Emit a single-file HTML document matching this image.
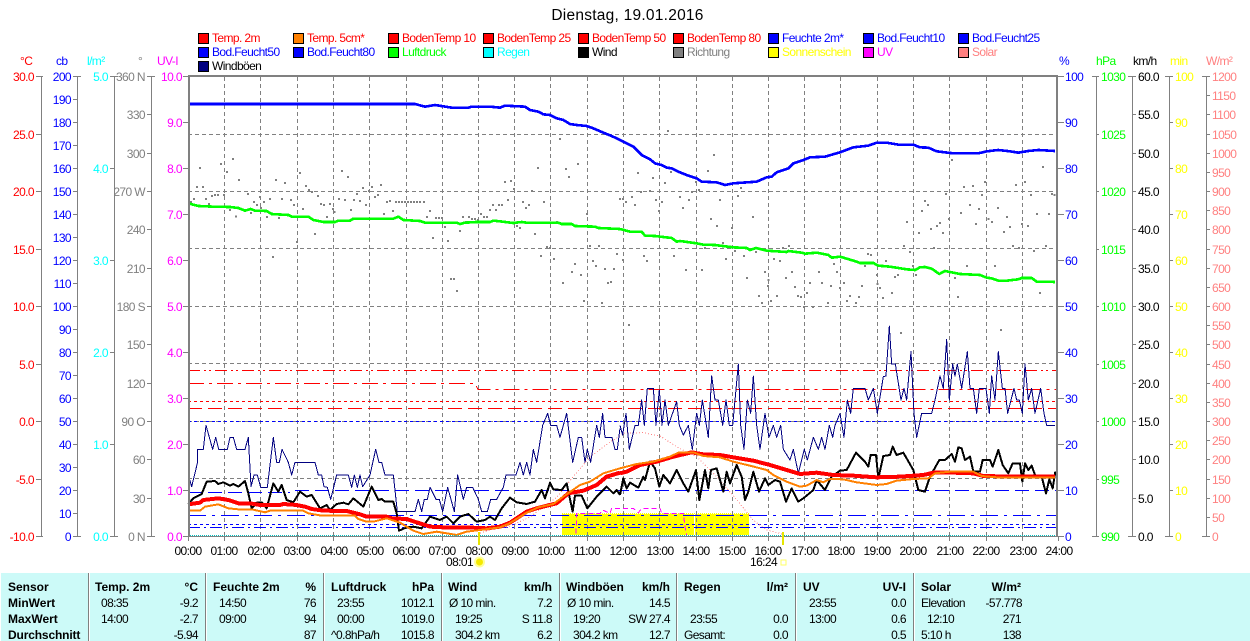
<!DOCTYPE html>
<html><head><meta charset="utf-8"><title>Dienstag, 19.01.2016</title>
<style>
html,body{margin:0;padding:0;background:#fff;width:1250px;height:641px;overflow:hidden}
svg{display:block;position:absolute;left:0;top:0}
text{font-family:"Liberation Sans",Arial,sans-serif;font-size:12px;letter-spacing:-.6px;white-space:pre}
.e text,text.e{text-anchor:end}
.s text{text-anchor:start}
.m text{text-anchor:middle}
.b text{font-weight:bold;letter-spacing:0}
.c{shape-rendering:crispEdges;fill:none}
</style></head><body>
<svg width="1250" height="641" viewBox="0 0 1250 641" xmlns="http://www.w3.org/2000/svg">
<rect width="1250" height="641" fill="#fff"/>
<text x="627.5" y="20" text-anchor="middle" style="font-size:15.5px;letter-spacing:.25px" fill="#000">Dienstag, 19.01.2016</text>

<!-- legend -->
<g stroke="#000" stroke-width="1" shape-rendering="crispEdges">
<rect x="198.500" y="33.500" width="10" height="10" fill="#f00"/><rect x="293.500" y="33.500" width="10" height="10" fill="#ff8000"/><rect x="388.500" y="33.500" width="10" height="10" fill="#f00"/><rect x="483.500" y="33.500" width="10" height="10" fill="#f00"/><rect x="578.500" y="33.500" width="10" height="10" fill="#f00"/><rect x="673.500" y="33.500" width="10" height="10" fill="#f00"/><rect x="768.500" y="33.500" width="10" height="10" fill="#00f"/><rect x="863.500" y="33.500" width="10" height="10" fill="#00f"/><rect x="958.500" y="33.500" width="10" height="10" fill="#00f"/>
<rect x="198.500" y="47.500" width="10" height="10" fill="#00f"/><rect x="293.500" y="47.500" width="10" height="10" fill="#00f"/><rect x="388.500" y="47.500" width="10" height="10" fill="#0f0"/><rect x="483.500" y="47.500" width="10" height="10" fill="#0ff"/><rect x="578.500" y="47.500" width="10" height="10" fill="#000"/><rect x="673.500" y="47.500" width="10" height="10" fill="#808080"/><rect x="768.500" y="47.500" width="10" height="10" fill="#ff0"/><rect x="863.500" y="47.500" width="10" height="10" fill="#f0f"/><rect x="958.500" y="47.500" width="10" height="10" fill="#ff8080"/>
<rect x="198.500" y="61.500" width="10" height="10" fill="#000080"/>
</g>
<g>
<text x="212" y="42" fill="#f00">Temp. 2m</text><text x="307" y="42" fill="#f00">Temp. 5cm*</text><text x="402" y="42" fill="#f00">BodenTemp 10</text><text x="497" y="42" fill="#f00">BodenTemp 25</text><text x="592" y="42" fill="#f00">BodenTemp 50</text><text x="687" y="42" fill="#f00">BodenTemp 80</text><text x="782" y="42" fill="#00f">Feuchte 2m*</text><text x="877" y="42" fill="#00f">Bod.Feucht10</text><text x="972" y="42" fill="#00f">Bod.Feucht25</text>
<text x="212" y="56" fill="#00f">Bod.Feucht50</text><text x="307" y="56" fill="#00f">Bod.Feucht80</text><text x="402" y="56" fill="#0f0">Luftdruck</text><text x="497" y="56" fill="#0ff">Regen</text><text x="592" y="56" fill="#000">Wind</text><text x="687" y="56" fill="#808080">Richtung</text><text x="782" y="56" fill="#ff0">Sonnenschein</text><text x="877" y="56" fill="#f0f">UV</text><text x="972" y="56" fill="#ff8080">Solar</text>
<text x="212" y="70" fill="#000">Windböen</text>
</g>

<!-- unit labels -->
<text x="20" y="65" fill="#f00">°C</text><text x="56" y="65" fill="#00f">cb</text><text x="87" y="65" fill="#0ff">l/m²</text><text x="138" y="65" fill="#808080">°</text><text x="157" y="65" fill="#f0f">UV-I</text>
<text x="1059" y="65" fill="#00f">%</text><text x="1096" y="65" fill="#0f0">hPa</text><text x="1133" y="65" fill="#000">km/h</text><text x="1170" y="65" fill="#ff0">min</text><text x="1206" y="65" fill="#ff8080">W/m²</text>

<!-- axes -->
<g class="c" stroke="#808080" stroke-width="1">
<path d="M41.500 76V536M36 76.500H43M36 134.500H41M36 191.500H41M36 249.500H41M36 306.500H41M36 364.500H41M36 421.500H41M36 479.500H41M36 536.500H43"/>
<path d="M77.500 76V536M73 76.500H81M73 99.500H77M73 122.500H77M73 145.500H77M73 168.500H77M73 191.500H77M73 214.500H77M73 237.500H77M73 260.500H77M73 283.500H77M73 306.500H77M73 329.500H77M73 352.500H77M73 375.500H77M73 398.500H77M73 421.500H77M73 444.500H77M73 467.500H77M73 490.500H77M73 513.500H77M73 536.500H81"/>
<path d="M114.500 76V536M110 76.500H118M110 168.500H114M110 260.500H114M110 352.500H114M110 444.500H114M110 536.500H118"/>
<path d="M151.500 76V536M147 76.500H155M147 114.500H151M147 153.500H151M147 191.500H151M147 229.500H151M147 268.500H151M147 306.500H151M147 344.500H151M147 383.500H151M147 421.500H151M147 459.500H151M147 498.500H151M147 536.500H155"/>
<path d="M183 76.500H188M183 122.500H188M183 168.500H188M183 214.500H188M183 260.500H188M183 306.500H188M183 352.500H188M183 398.500H188M183 444.500H188M183 490.500H188M183 536.500H188"/>
<path d="M1058 76.500H1064M1058 122.500H1064M1058 168.500H1064M1058 214.500H1064M1058 260.500H1064M1058 306.500H1064M1058 352.500H1064M1058 398.500H1064M1058 444.500H1064M1058 490.500H1064M1058 536.500H1064"/>
<path d="M1096.500 76V536M1092 76.500H1099M1096 134.500H1099M1096 191.500H1099M1096 249.500H1099M1096 306.500H1099M1096 364.500H1099M1096 421.500H1099M1096 479.500H1099M1092 536.500H1099"/>
<path d="M1132.500 76V536M1128 76.500H1136M1132 114.500H1136M1132 153.500H1136M1132 191.500H1136M1132 229.500H1136M1132 268.500H1136M1132 306.500H1136M1132 344.500H1136M1132 383.500H1136M1132 421.500H1136M1132 459.500H1136M1132 498.500H1136M1128 536.500H1136"/>
<path d="M1169.500 76V536M1165 76.500H1173M1169 122.500H1173M1169 168.500H1173M1169 214.500H1173M1169 260.500H1173M1169 306.500H1173M1169 352.500H1173M1169 398.500H1173M1169 444.500H1173M1169 490.500H1173M1165 536.500H1173"/>
<path d="M1206.500 76V536M1202 76.500H1210M1206 95.500H1210M1206 114.500H1210M1206 134.500H1210M1206 153.500H1210M1206 172.500H1210M1206 191.500H1210M1206 210.500H1210M1206 229.500H1210M1206 249.500H1210M1206 268.500H1210M1206 287.500H1210M1206 306.500H1210M1206 325.500H1210M1206 344.500H1210M1206 364.500H1210M1206 383.500H1210M1206 402.500H1210M1206 421.500H1210M1206 440.500H1210M1206 459.500H1210M1206 479.500H1210M1206 498.500H1210M1206 517.500H1210M1202 536.500H1210"/>
</g>

<g class="e" fill="#f00"><text x="34" y="81">30.0</text><text x="34" y="139">25.0</text><text x="34" y="196">20.0</text><text x="34" y="254">15.0</text><text x="34" y="311">10.0</text><text x="34" y="369">5.0</text><text x="34" y="426">0.0</text><text x="34" y="484">-5.0</text><text x="34" y="541">-10.0</text></g>
<g class="e" fill="#00f"><text x="71" y="81">200</text><text x="71" y="104">190</text><text x="71" y="127">180</text><text x="71" y="150">170</text><text x="71" y="173">160</text><text x="71" y="196">150</text><text x="71" y="219">140</text><text x="71" y="242">130</text><text x="71" y="265">120</text><text x="71" y="288">110</text><text x="71" y="311">100</text><text x="71" y="334">90</text><text x="71" y="357">80</text><text x="71" y="380">70</text><text x="71" y="403">60</text><text x="71" y="426">50</text><text x="71" y="449">40</text><text x="71" y="472">30</text><text x="71" y="495">20</text><text x="71" y="518">10</text><text x="71" y="541">0</text></g>
<g class="e" fill="#0ff"><text x="108" y="81">5.0</text><text x="108" y="173">4.0</text><text x="108" y="265">3.0</text><text x="108" y="357">2.0</text><text x="108" y="449">1.0</text><text x="108" y="541">0.0</text></g>
<g class="e" fill="#808080"><text x="145" y="81">360 N</text><text x="145" y="119">330</text><text x="145" y="158">300</text><text x="145" y="196">270 W</text><text x="145" y="234">240</text><text x="145" y="273">210</text><text x="145" y="311">180 S</text><text x="145" y="349">150</text><text x="145" y="388">120</text><text x="145" y="426">90 O</text><text x="145" y="464">60</text><text x="145" y="503">30</text><text x="145" y="541">0 N</text></g>
<g class="e" fill="#f0f"><text x="182" y="81">10.0</text><text x="182" y="127">9.0</text><text x="182" y="173">8.0</text><text x="182" y="219">7.0</text><text x="182" y="265">6.0</text><text x="182" y="311">5.0</text><text x="182" y="357">4.0</text><text x="182" y="403">3.0</text><text x="182" y="449">2.0</text><text x="182" y="495">1.0</text><text x="182" y="541">0.0</text></g>
<g fill="#00f"><text x="1065" y="81">100</text><text x="1065" y="127">90</text><text x="1065" y="173">80</text><text x="1065" y="219">70</text><text x="1065" y="265">60</text><text x="1065" y="311">50</text><text x="1065" y="357">40</text><text x="1065" y="403">30</text><text x="1065" y="449">20</text><text x="1065" y="495">10</text><text x="1065" y="541">0</text></g>
<g fill="#0f0"><text x="1101" y="81">1030</text><text x="1101" y="139">1025</text><text x="1101" y="196">1020</text><text x="1101" y="254">1015</text><text x="1101" y="311">1010</text><text x="1101" y="369">1005</text><text x="1101" y="426">1000</text><text x="1101" y="484">995</text><text x="1101" y="541">990</text></g>
<g fill="#000"><text x="1138" y="81">60.0</text><text x="1138" y="119">55.0</text><text x="1138" y="158">50.0</text><text x="1138" y="196">45.0</text><text x="1138" y="234">40.0</text><text x="1138" y="273">35.0</text><text x="1138" y="311">30.0</text><text x="1138" y="349">25.0</text><text x="1138" y="388">20.0</text><text x="1138" y="426">15.0</text><text x="1138" y="464">10.0</text><text x="1138" y="503">5.0</text><text x="1138" y="541">0.0</text></g>
<g fill="#ff0"><text x="1175" y="81">100</text><text x="1175" y="127">90</text><text x="1175" y="173">80</text><text x="1175" y="219">70</text><text x="1175" y="265">60</text><text x="1175" y="311">50</text><text x="1175" y="357">40</text><text x="1175" y="403">30</text><text x="1175" y="449">20</text><text x="1175" y="495">10</text><text x="1175" y="541">0</text></g>
<g fill="#ff8080"><text x="1212" y="81">1200</text><text x="1212" y="100">1150</text><text x="1212" y="119">1100</text><text x="1212" y="139">1050</text><text x="1212" y="158">1000</text><text x="1212" y="177">950</text><text x="1212" y="196">900</text><text x="1212" y="215">850</text><text x="1212" y="234">800</text><text x="1212" y="254">750</text><text x="1212" y="273">700</text><text x="1212" y="292">650</text><text x="1212" y="311">600</text><text x="1212" y="330">550</text><text x="1212" y="349">500</text><text x="1212" y="369">450</text><text x="1212" y="388">400</text><text x="1212" y="407">350</text><text x="1212" y="426">300</text><text x="1212" y="445">250</text><text x="1212" y="464">200</text><text x="1212" y="484">150</text><text x="1212" y="503">100</text><text x="1212" y="522">50</text><text x="1212" y="541">0</text></g>

<!-- yellow sunshine -->
<rect x="562" y="514" width="187" height="21" fill="#ff0"/>
<path class="c" d="M562 513.500H749" stroke="#ff0" stroke-dasharray="1 1"/>
<rect x="694" y="514" width="1" height="21" fill="#fff"/>

<!-- grid -->
<g class="c" stroke="#808080" stroke-width="1" stroke-dasharray="4 3">
<path d="M188 134.500H1056M188 191.500H1056M188 248.500H1056M188 306.500H1056M188 363.500H1056M188 421.500H1056M188 478.500H1056"/>
<path d="M224.500 77V536M260.500 77V536M297.500 77V536M333.500 77V536M369.500 77V536M406.500 77V536M442.500 77V536M478.500 77V536M514.500 77V536M550.500 77V536M587.500 77V536M623.500 77V536M659.500 77V536M696.500 77V536M732.500 77V536M768.500 77V536M804.500 77V536M840.500 77V536M877.500 77V536M913.500 77V536M949.500 77V536M986.500 77V536M1022.500 77V536"/>
</g>

<!-- direction dots -->
<g transform="translate(180,90) scale(.33333)" stroke="#808080" stroke-width="6" class="c"><path d="M57 234h6M120 222h6M138 246h6M156 207h6M174 270h6M48 291h6M66 291h6M39 327h6M30 336h6M75 327h6M84 342h6M93 318h6M102 315h6M111 315h6M129 315h6M147 360h6M165 380h6M201 312h6M210 369h6M219 336h6M228 345h6M237 321h6M240 354h6M249 336h6M258 381h6M267 327h6M276 501h6M285 270h6M294 384h6M303 327h6M312 279h6M330 330h6M339 345h6M348 456h6M357 249h6M366 357h6M375 288h6M384 300h6M393 306h6M402 432h6M411 318h6M420 342h6M429 345h6M438 381h6M447 342h6M456 357h6M460 366h6M474 327h6M483 243h6M492 330h6M501 261h6M510 360h6M519 330h6M528 312h6M537 333h6M546 294h6M555 345h6M564 303h6M573 291h6M582 321h6M591 315h6M600 285h6M609 372h6M618 336h6M627 333h6M636 363h6M645 336h6M654 336h6M663 336h6M672 336h6M681 336h6M690 336h6M699 336h6M708 336h6M717 336h6M729 336h6M738 381h6M747 363h6M756 444h6M765 384h6M774 384h6M783 384h6M792 411h6M801 453h6M810 567h6M819 567h6M828 603h6M837 423h6M846 381h6M855 396h6M864 381h6M873 387h6M882 387h6M891 390h6M900 372h6M909 381h6M918 381h6M927 360h6M936 345h6M945 360h6M954 345h6M963 345h6M972 276h6M981 330h6M990 273h6M999 297h6M1008 408h6M1017 414h6M1026 336h6M1035 354h6M1044 345h6M1053 303h6M1062 432h6M1071 234h6M1080 498h6M1089 336h6M1098 471h6M1107 474h6M1119 507h6M1128 396h6M1137 147h6M1146 579h6M1155 237h6M1164 261h6M1173 546h6M1182 522h6M1191 222h6M1200 555h6M1209 633h6M1218 372h6M1227 468h6M1236 513h6M1245 528h6M1254 468h6M1263 639h6M1272 537h6M1281 579h6M1290 576h6M1299 537h6M1308 492h6M1317 327h6"/></g>
<g transform="translate(620,90) scale(.33333)" stroke="#808080" stroke-width="6" class="c"><path d="M6 327h6M15 336h6M33 321h6M42 345h6M51 249h6M6 510h6M60 306h6M69 498h6M78 513h6M87 303h6M96 264h6M105 330h6M114 363h6M123 336h6M132 279h6M141 123h6M150 246h6M159 498h6M177 321h6M186 354h6M195 540h6M204 330h6M213 306h6M225 276h6M234 300h6M243 540h6M252 474h6M261 243h6M270 387h6M279 195h6M288 408h6M297 330h6M306 459h6M315 507h6M324 471h6M333 414h6M342 483h6M351 318h6M360 294h6M369 498h6M378 564h6M396 381h6M405 486h6M414 618h6M423 639h6M432 546h6M441 588h6M442 570h6M450 633h6M459 507h6M468 618h6M477 513h6M486 474h6M495 564h6M504 468h6M513 546h6M522 591h6M531 618h6M540 621h6M549 651h6M558 609h6M567 579h6M576 651h6M594 546h6M603 579h6M621 639h6M630 588h6M639 522h6M648 546h6M657 594h6M669 579h6M678 633h6M687 618h6M705 639h6M714 621h6M723 588h6M732 528h6M741 492h6M750 495h6M768 555h6M769 582h6M777 594h6M786 624h6M795 513h6M813 609h6M822 561h6M831 555h6M849 468h6M858 396h6M867 486h6M876 528h6M885 555h6M894 429h6M903 363h6M912 333h6M921 345h6M930 417h6M939 474h6M948 408h6M957 399h6M966 429h6M975 312h6M984 387h6M993 210h6M1002 564h6M1011 621h6M1020 369h6M1029 291h6M1038 528h6M1047 345h6M1056 288h6M1065 402h6M1074 357h6M1083 315h6M1092 276h6M1103 387h6M1113 396h6M1122 528h6M1131 354h6M1149 426h6M1158 381h6M1167 411h6M1176 468h6M1185 285h6M1194 474h6M1203 402h6M1212 276h6M1221 408h6M1230 315h6M1239 483h6M1248 372h6M1257 609h6M1266 231h6M1275 468h6M1284 372h6M1293 312h6M1300 315h6"/></g>
<path class="c" stroke="#808080" stroke-width="2" d="M628 325h2M900 333h2M1000 330h2"/>

<!-- coloured reference lines -->
<g class="c" stroke="#f00" stroke-width="1">
<path d="M188 370.500H1056" stroke-dasharray="12 4 2 3 2 4"/>
<path d="M188 383.500H475L478 389.500H1056" stroke-dasharray="16 5 3 5"/>
<path d="M188 401.500H1056" stroke-dasharray="3 3"/>
<path d="M188 408.500H1056" stroke-dasharray="14 6"/>
</g>
<g class="c" stroke="#00f" stroke-width="1">
<path d="M188 421.500H1056" stroke-dasharray="3 3"/>
<path d="M188 492.500H290M295 490.500H1056" stroke-dasharray="14 6"/>
<path d="M188 515.500H1056" stroke-dasharray="18 6 3 6"/>
<path d="M188 524.500H1056" stroke-dasharray="3 3"/>
<path d="M188 527.500H1056" stroke-dasharray="12 4 2 4"/>
</g>

<!-- solar -->
<polyline class="c" stroke="#ff8080" stroke-dasharray="1 2" points="480,533 497,528 508,527 530,517 557,497 573,477 590,457 610,442 625,433 643,432.700 660,436 677,447 697,457 717,477 737,500 753,520 767,530 782,534"/>
<!-- uv -->
<g transform="translate(420,480) scale(.33333)"><polyline class="c" stroke="#f0f" stroke-width="3" stroke-dasharray="15 9" points="468,160 470,100 540,100 545,92 552,92 570,100 575,85 640,85 655,98 665,85 720,85 725,100 790,100 795,140 800,165"/></g>

<!-- gust -->
<g transform="translate(180,320) scale(.33333)" class="c" stroke="#000080" stroke-width="3" stroke-linejoin="round">
<polyline points="25,465 35,500 52,430 52,388 70,388 78,316 98,388 107,352 116,388 142,388 150,352 160,352 170,388 195,388 205,352 213,500 222,465 232,465 242,502 262,502 280,352 290,427 298,427 306,388 325,427 335,465 345,427 405,427 415,465 425,465 432,500 442,502 452,538 470,465 505,465 515,502 523,465 532,502 540,465 548,500 570,465 587,388 597,427 605,427 615,465 640,465 652,575 705,575 715,538 725,575 733,538 742,538 750,502 768,538 778,538 788,575 803,502 823,575 833,465 850,538 860,502 878,502 895,538 905,575 922,575 932,538 950,538 970,502 978,465 1008,465 1020,427 1030,465 1040,427 1050,465 1060,388 1070,427 1088,316 1103,280 1112,316 1130,316 1140,352 1160,280 1178,427 1195,352 1205,352 1215,427 1222,388 1232,427 1250,316 1258,352 1268,280 1275,352 1296,352 1305,388 1312,388 1320,325"/>
</g>
<g transform="translate(620,320) scale(.33333)" class="c" stroke="#000080" stroke-width="3" stroke-linejoin="round">
<polyline points="0,316 8,345 18,280 28,388 45,316 55,316 65,240 73,316 82,205 100,205 108,316 118,210 126,316 135,240 145,316 170,245 178,316 190,345 205,316 217,388 230,280 238,316 247,240 265,352 275,168 285,240 295,240 308,316 318,240 328,316 338,316 355,132 362,316 372,388 382,240 392,280 400,168 410,316 420,388 435,280 447,352 460,316 470,352 482,316 490,388 510,420 520,388 535,460 553,388 562,420 580,352 595,388 605,352 615,388 628,316 638,352 645,316 660,280 672,352 682,240 692,280 700,205 735,205 745,240 760,205 772,280 790,170 798,168 808,18 815,132 826,132 843,240 852,205 860,240 873,95 882,280 890,352 905,280 935,280 945,240 960,168 970,205 980,58 988,240 998,132 1005,168 1012,132 1025,205 1042,95 1050,205 1060,205 1070,280 1078,205 1098,205 1108,280 1115,168 1125,240 1135,95 1147,205 1155,205 1163,280 1182,205 1190,240 1198,240 1207,280 1215,132 1225,240 1235,205 1245,280 1262,205 1272,280 1280,316 1305,316"/>
</g>

<!-- wind -->
<g transform="translate(180,320) scale(.33333)" class="c" stroke="#000" stroke-width="6" stroke-linejoin="round">
<polyline points="25,552 40,535 65,522 80,485 105,483 115,492 130,487 150,497 160,492 175,500 195,483 205,520 215,565 230,548 245,547 260,565 280,490 295,515 305,495 320,540 340,547 360,515 380,530 395,525 420,565 440,555 450,570 470,552 490,548 505,553 520,535 550,560 575,500 595,540 605,537 615,545 640,545 650,580 657,632 680,622 700,620 725,625 750,590 780,600 800,590 820,610 840,590 865,582 890,605 915,600 930,590 945,600 965,565 990,533 1010,547 1040,552 1065,545 1085,510 1095,535 1110,488 1120,508 1145,510 1160,490 1178,575 1185,527 1205,527 1222,565 1250,530 1280,500 1300,520 1310,510 1320,525"/>
</g>
<g transform="translate(620,320) scale(.33333)" class="c" stroke="#000" stroke-width="6" stroke-linejoin="round">
<polyline points="0,525 10,475 20,505 30,488 55,503 70,470 75,480 90,425 105,445 118,500 130,465 150,490 170,450 190,490 205,515 228,450 238,540 255,450 265,505 273,450 290,445 310,515 320,455 330,490 350,435 365,470 375,540 385,515 400,455 417,515 435,475 445,495 465,480 480,485 498,545 515,505 535,545 550,535 580,510 590,480 615,510 635,470 660,452 680,450 708,398 735,425 745,440 752,405 768,405 775,475 790,408 810,405 818,380 830,405 850,398 880,450 895,510 915,515 930,470 958,420 975,420 995,402 1005,425 1015,382 1025,385 1035,420 1050,410 1060,455 1080,455 1088,420 1110,420 1118,440 1135,390 1148,435 1165,460 1178,430 1200,430 1207,485 1215,430 1225,450 1235,437 1245,465 1265,470 1278,520 1288,478 1298,505 1306,455"/>
</g>

<!-- temp 2m -->
<g transform="translate(180,320) scale(.33333)" class="c" stroke="#f00" stroke-width="12" stroke-linejoin="round">
<polyline points="25,553 60,548 70,540 115,535 145,540 175,550 210,550 240,555 300,555 310,552 350,555 375,560 395,567 430,572 500,573 540,583 560,590 620,590 635,595 680,597 710,607 750,620 790,622 855,622 920,625 960,620 990,608 1040,575 1070,565 1130,550 1165,520 1210,512 1250,495 1280,470 1320,458"/>
</g>
<g transform="translate(620,320) scale(.33333)" class="c" stroke="#f00" stroke-width="12" stroke-linejoin="round">
<polyline points="0,460 20,455 60,435 110,425 160,410 215,397 250,403 300,405 340,412 400,422 450,435 500,450 540,462 590,458 640,465 700,467 770,472 840,470 910,465 945,457 1000,458 1060,460 1090,468 1180,470 1305,470"/>
</g>
<!-- temp 5cm -->
<g transform="translate(180,320) scale(.33333)" class="c" stroke="#ff8000" stroke-width="6" stroke-linejoin="round">
<polyline points="25,572 60,572 75,560 115,553 145,565 175,568 215,568 255,577 270,572 370,572 385,580 425,587 525,587 535,597 560,605 580,605 620,595 660,608 700,632 730,642 770,635 800,640 830,645 860,635 900,630 960,622 985,612 1040,578 1075,562 1120,552 1150,530 1200,495 1230,485 1270,460 1320,445"/>
</g>
<g transform="translate(620,320) scale(.33333)" class="c" stroke="#ff8000" stroke-width="6" stroke-linejoin="round">
<polyline points="0,445 50,432 100,425 150,410 175,398 220,397 250,408 300,412 340,425 390,437 440,450 460,465 500,485 540,500 560,497 590,480 610,487 630,477 670,478 710,487 770,495 800,492 830,482 880,477 925,475 945,460 990,455 1060,455 1085,468 1130,472 1305,472"/>
</g>

<!-- humidity -->
<g transform="translate(180,90) scale(.33333)" class="c" stroke="#00f" stroke-width="8" stroke-linejoin="round">
<polyline points="25,42 705,42 735,50 765,45 815,53 865,53 875,50 930,50 960,53 975,47 1035,50 1050,60 1075,65 1090,73 1110,75 1130,85 1150,90 1170,102 1190,105 1220,108 1240,115 1270,128 1295,138 1320,150"/>
</g>
<g transform="translate(620,90) scale(.33333)" class="c" stroke="#00f" stroke-width="8" stroke-linejoin="round">
<polyline points="0,150 40,170 65,195 90,208 105,220 125,225 140,233 155,235 175,245 200,255 230,265 245,275 290,277 315,285 340,280 410,275 440,262 455,260 470,247 505,235 520,220 550,210 570,202 615,200 660,187 700,172 745,167 770,158 800,158 835,164 880,164 900,172 925,173 950,184 1000,190 1075,190 1100,184 1135,180 1170,184 1195,188 1225,183 1255,180 1305,183"/>
</g>
<!-- pressure -->
<g transform="translate(180,90) scale(.33333)" class="c" stroke="#0f0" stroke-width="8" stroke-linejoin="round">
<polyline points="25,340 55,348 100,350 150,351 175,354 195,362 212,357 225,362 260,363 275,372 325,375 335,380 385,380 400,390 430,396 465,396 475,392 510,392 520,386 640,386 655,380 670,390 720,393 735,398 830,398 840,402 855,398 890,396 930,396 940,392 960,394 1000,399 1025,396 1040,398 1135,398 1145,402 1175,402 1185,408 1245,410 1255,414 1320,417"/>
</g>
<g transform="translate(620,90) scale(.33333)" class="c" stroke="#0f0" stroke-width="8" stroke-linejoin="round">
<polyline points="0,417 30,425 65,425 75,437 105,438 155,444 170,455 180,453 230,460 250,464 285,465 340,472 380,474 390,480 408,474 440,482 500,486 505,483 545,488 555,491 590,488 625,495 635,503 660,500 710,515 720,519 760,519 775,527 810,530 860,538 885,540 900,532 915,531 935,536 958,552 975,543 1005,549 1020,552 1080,555 1100,563 1115,565 1135,572 1160,572 1195,568 1205,564 1235,564 1250,575 1280,575 1305,576"/>
</g>

<!-- frame -->
<path class="c" d="M188 535.500H1056" stroke="#00c0c0" stroke-dasharray="1 1"/>
<rect x="188" y="75" width="870" height="2" fill="#808080"/>
<rect x="188" y="75" width="2" height="462" fill="#808080"/>
<rect x="1056" y="75" width="2" height="462" fill="#808080"/>
<rect x="188" y="536" width="870" height="1" fill="#808080"/>
<path class="c" stroke="#808080" d="M188.500 537V541M224.500 537V541M260.500 537V541M297.500 537V541M333.500 537V541M369.500 537V541M406.500 537V541M442.500 537V541M478.500 537V541M514.500 537V541M550.500 537V541M587.500 537V541M623.500 537V541M659.500 537V541M696.500 537V541M732.500 537V541M768.500 537V541M804.500 537V541M840.500 537V541M877.500 537V541M913.500 537V541M949.500 537V541M986.500 537V541M1022.500 537V541M1058.500 537V541"/>

<!-- hours -->
<g class="m" fill="#000"><text x="188" y="555">00:00</text><text x="224" y="555">01:00</text><text x="261" y="555">02:00</text><text x="297" y="555">03:00</text><text x="334" y="555">04:00</text><text x="370" y="555">05:00</text><text x="406" y="555">06:00</text><text x="442" y="555">07:00</text><text x="479" y="555">08:00</text><text x="515" y="555">09:00</text><text x="551" y="555">10:00</text><text x="587" y="555">11:00</text><text x="623" y="555">12:00</text><text x="660" y="555">13:00</text><text x="696" y="555">14:00</text><text x="732" y="555">15:00</text><text x="768" y="555">16:00</text><text x="805" y="555">17:00</text><text x="841" y="555">18:00</text><text x="877" y="555">19:00</text><text x="913" y="555">20:00</text><text x="950" y="555">21:00</text><text x="986" y="555">22:00</text><text x="1023" y="555">23:00</text><text x="1059" y="555">24:00</text></g>
<rect x="478" y="532" width="2" height="13" fill="#e6e600"/><rect x="782" y="532" width="2" height="13" fill="#e6e600"/>
<text x="446" y="566" fill="#000">08:01</text><text x="750" y="566" fill="#000">16:24</text>
<circle cx="479.500" cy="562" r="5.500" fill="#ffff99"/><circle cx="479.500" cy="562" r="3.500" fill="#f5e900"/>
<rect x="781" y="560" width="5" height="5" fill="#fff" stroke="#ffff66"/>

<!-- table -->
<rect x="1" y="573" width="1249" height="68" fill="#ccfaf8"/>
<g class="c" stroke="#808080"><path d="M88.500 573V641M205.500 573V641M323.500 573V641M441.500 573V641M559.500 573V641M676.500 573V641M795.500 573V641M913.500 573V641"/></g>
<g class="c" stroke="#fff"><path d="M89.500 573V641M206.500 573V641M324.500 573V641M442.500 573V641M560.500 573V641M677.500 573V641M796.500 573V641M914.500 573V641"/></g>
<g class="b" fill="#000">
<text x="8" y="591">Sensor</text><text x="8" y="607">MinWert</text><text x="8" y="623">MaxWert</text><text x="8" y="639" style="letter-spacing:-.15px">Durchschnitt</text>
<text x="95" y="591">Temp. 2m</text><text x="213" y="591">Feuchte 2m</text><text x="331" y="591">Luftdruck</text><text x="448" y="591">Wind</text><text x="566" y="591">Windböen</text><text x="684" y="591">Regen</text><text x="803" y="591">UV</text><text x="921" y="591">Solar</text>
</g>
<g class="b e" fill="#000">
<text x="198" y="591">°C</text><text x="316" y="591">%</text><text x="434" y="591">hPa</text><text x="552" y="591">km/h</text><text x="670" y="591">km/h</text><text x="788" y="591">l/m²</text><text x="906" y="591">UV-I</text><text x="1021" y="591">W/m²</text>
</g>
<g fill="#000">
<text x="101" y="607">08:35</text><text x="101" y="623">14:00</text>
<text x="219" y="607">14:50</text><text x="219" y="623">09:00</text>
<text x="337" y="607">23:55</text><text x="337" y="623">00:00</text><text x="331" y="639">^0.8hPa/h</text>
<text x="449" y="607">Ø 10 min.</text><text x="455" y="623">19:25</text><text x="455" y="639">304.2 km</text>
<text x="567" y="607">Ø 10 min.</text><text x="573" y="623">19:20</text><text x="573" y="639">304.2 km</text>
<text x="690" y="623">23:55</text><text x="684" y="639">Gesamt:</text>
<text x="809" y="607">23:55</text><text x="809" y="623">13:00</text>
<text x="921" y="607">Elevation</text><text x="927" y="623">12:10</text><text x="921" y="639">5:10 h</text>
</g>
<g class="e" fill="#000">
<text x="198" y="607">-9.2</text><text x="198" y="623">-2.7</text><text x="198" y="639">-5.94</text>
<text x="316" y="607">76</text><text x="316" y="623">94</text><text x="316" y="639">87</text>
<text x="434" y="607">1012.1</text><text x="434" y="623">1019.0</text><text x="434" y="639">1015.8</text>
<text x="552" y="607">7.2</text><text x="552" y="623">S 11.8</text><text x="552" y="639">6.2</text>
<text x="670" y="607">14.5</text><text x="670" y="623">SW 27.4</text><text x="670" y="639">12.7</text>
<text x="788" y="623">0.0</text><text x="788" y="639">0.0</text>
<text x="906" y="607">0.0</text><text x="906" y="623">0.6</text><text x="906" y="639">0.5</text>
<text x="1022" y="607">-57.778</text><text x="1021" y="623">271</text><text x="1021" y="639">138</text>
</g>
</svg>
</body></html>
